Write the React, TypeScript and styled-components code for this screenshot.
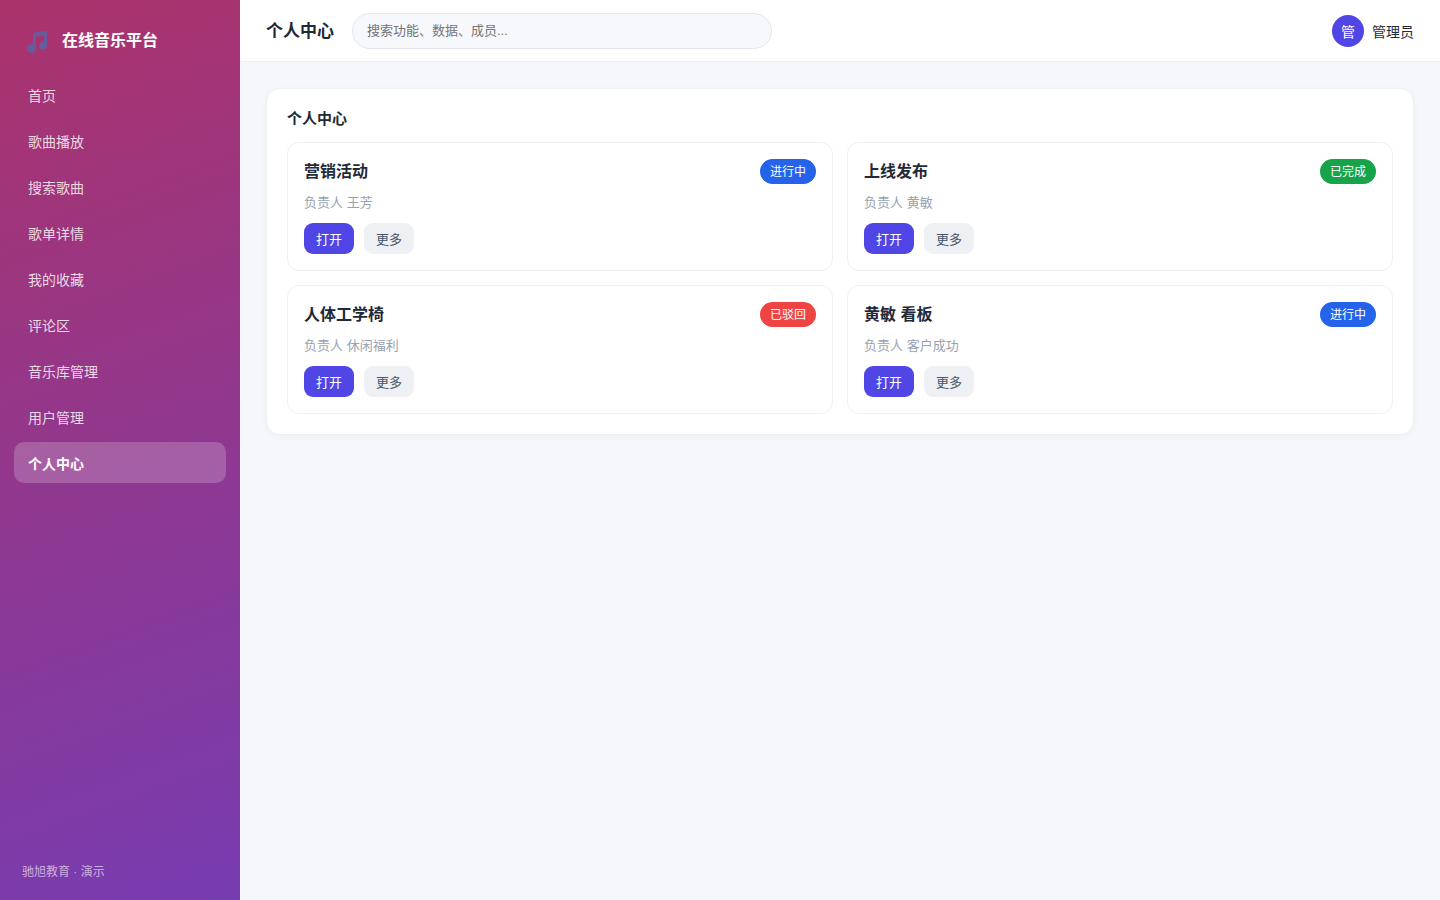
import React from "react";
import styled, { createGlobalStyle } from "styled-components";

const GlobalStyle = createGlobalStyle`
  * { box-sizing: border-box; }
  body {
    margin: 0;
    background: #f5f7fb;
    color: #1f2937;
    font-family: "Liberation Sans", "Noto Sans CJK SC", sans-serif;
    font-size: 14px;
  }
  button, input { font-family: inherit; }
  h1, h2, h3, p { margin: 0; }
`;

const Shell = styled.div`
  display: flex;
  min-height: 100vh;
`;

const Sidebar = styled.aside`
  display: flex;
  flex-direction: column;
  flex: 0 0 240px;
  padding: 20px 14px;
  color: #fff;
  background: linear-gradient(160deg, #ab336b, #773cb1);
`;

const Brand = styled.div`
  display: flex;
  align-items: center;
  gap: 15px;
  height: 38px;
  margin-bottom: 16px;
  padding: 0 13px;
  font-size: 16px;
  font-weight: 700;
`;

const Note = styled.svg`
  flex: none;
  width: 20px;
  height: 22px;
  margin-top: 6px;
`;

const Nav = styled.nav`
  display: flex;
  flex-direction: column;
  gap: 5px;
`;

const NavLink = styled.a<{ $active: boolean }>`
  display: flex;
  align-items: center;
  height: 41px;
  padding: 0 14px;
  border-radius: 10px;
  color: ${(p) => (p.$active ? "#fff" : "rgba(255, 255, 255, 0.82)")};
  background: ${(p) => (p.$active ? "rgba(255, 255, 255, 0.2)" : "transparent")};
  font-weight: ${(p) => (p.$active ? 700 : 400)};
  text-decoration: none;
`;

const SideFooter = styled.footer`
  margin-top: auto;
  padding: 2px 8px 0;
  color: rgba(255, 255, 255, 0.6);
  font-size: 12px;
  line-height: 16px;
`;

const Main = styled.div`
  flex: 1;
  min-width: 0;
`;

const Topbar = styled.header`
  display: flex;
  align-items: center;
  gap: 18px;
  height: 62px;
  padding: 0 26px;
  background: #fff;
  border-bottom: 1px solid #eceef2;
`;

const PageTitle = styled.h1`
  padding-top: 2px;
  font-size: 17px;
  line-height: 24px;
  white-space: nowrap;
`;

const Search = styled.input`
  flex: 0 1 420px;
  min-width: 0;
  height: 36px;
  padding: 0 14px;
  border: 1px solid #e3e6ee;
  border-radius: 18px;
  background: #f6f8fc;
  color: #1f2937;
  font-size: 13px;
  &::placeholder { color: #757575; opacity: 1; }
`;

const User = styled.div`
  display: flex;
  align-items: center;
  gap: 8px;
  margin-left: auto;
  white-space: nowrap;
`;

const Avatar = styled.span`
  display: grid;
  place-items: center;
  width: 32px;
  height: 32px;
  border-radius: 50%;
  background: #4f46e5;
  color: #fff;
`;

const Content = styled.main`
  padding: 26px;
`;

const Panel = styled.section`
  padding: 20px;
  border: 1px solid #eef0f4;
  border-radius: 14px;
  background: #fff;
  box-shadow: 0 2px 6px rgba(30, 41, 90, 0.04);
`;

const PanelTitle = styled.h2`
  margin-bottom: 13px;
  font-size: 15px;
  line-height: 20px;
`;

const Grid = styled.div`
  display: grid;
  grid-template-columns: repeat(2, minmax(0, 1fr));
  gap: 14px;
`;

const Card = styled.article`
  padding: 16px;
  border: 1px solid #eef0f3;
  border-radius: 12px;
`;

const CardHead = styled.div`
  display: flex;
  align-items: center;
  justify-content: space-between;
`;

const CardTitle = styled.h3`
  padding-top: 1px;
  font-size: 16px;
  line-height: 24px;
`;

const tones = { blue: "#2563eb", green: "#16a34a", red: "#ef4444" };

const Badge = styled.span<{ $tone: keyof typeof tones }>`
  padding: 2px 10px 0;
  border-radius: 13px;
  background: ${(p) => tones[p.$tone]};
  color: #fff;
  font-size: 12px;
  line-height: 23px;
`;

const Owner = styled.p`
  margin: 10px 0 11px;
  color: #98a1b0;
  font-size: 13px;
  line-height: 18px;
`;

const Actions = styled.div`
  display: flex;
  gap: 10px;
`;

const Button = styled.button<{ $primary?: boolean }>`
  height: 31px;
  padding: 0 12px;
  border: 0;
  border-radius: 9px;
  background: ${(p) => (p.$primary ? "#4f46e5" : "#eef0f4")};
  color: ${(p) => (p.$primary ? "#fff" : "#475569")};
  font-size: 13px;
  cursor: pointer;
`;

const navItems = [
  "首页",
  "歌曲播放",
  "搜索歌曲",
  "歌单详情",
  "我的收藏",
  "评论区",
  "音乐库管理",
  "用户管理",
  "个人中心",
];

const cards: { title: string; owner: string; status: string; tone: keyof typeof tones }[] = [
  { title: "营销活动", owner: "王芳", status: "进行中", tone: "blue" },
  { title: "上线发布", owner: "黄敏", status: "已完成", tone: "green" },
  { title: "人体工学椅", owner: "休闲福利", status: "已驳回", tone: "red" },
  { title: "黄敏 看板", owner: "客户成功", status: "进行中", tone: "blue" },
];

export default function App() {
  return (
    <>
      <GlobalStyle />
      <Shell>
        <Sidebar>
          <Brand>
            <Note viewBox="0 0 20 22" aria-hidden="true">
              <path
                d="M6 2.5Q6 1.5 7 1.5L11 1.500L13 0.500L19 0Q20 0 20 1V15Q20 18.500 16 18.500Q12 18.500 12 15.500Q12 11 16 10.500Q17 10.500 17 9.500V5.500Q17 4.500 16 4.500L10 5.500Q9 5.500 9 6.500V17Q9 22 4.500 22Q0 22 0 17.500Q0 13.500 5 13Q6 13 6 12Z"
                fill="#665b9b"
              />
            </Note>
            在线音乐平台
          </Brand>
          <Nav>
            {navItems.map((label) => (
              <NavLink
                key={label}
                href="#"
                $active={label === "个人中心"}
                aria-current={label === "个人中心" ? "page" : undefined}
              >
                {label}
              </NavLink>
            ))}
          </Nav>
          <SideFooter>驰旭教育 · 演示</SideFooter>
        </Sidebar>
        <Main>
          <Topbar>
            <PageTitle>个人中心</PageTitle>
            <Search type="search" aria-label="搜索" placeholder="搜索功能、数据、成员..." />
            <User>
              <Avatar>管</Avatar>
              管理员
            </User>
          </Topbar>
          <Content>
            <Panel>
              <PanelTitle>个人中心</PanelTitle>
              <Grid>
                {cards.map((card) => (
                  <Card key={card.title}>
                    <CardHead>
                      <CardTitle>{card.title}</CardTitle>
                      <Badge $tone={card.tone}>{card.status}</Badge>
                    </CardHead>
                    <Owner>负责人 {card.owner}</Owner>
                    <Actions>
                      <Button type="button" $primary>打开</Button>
                      <Button type="button">更多</Button>
                    </Actions>
                  </Card>
                ))}
              </Grid>
            </Panel>
          </Content>
        </Main>
      </Shell>
    </>
  );
}
